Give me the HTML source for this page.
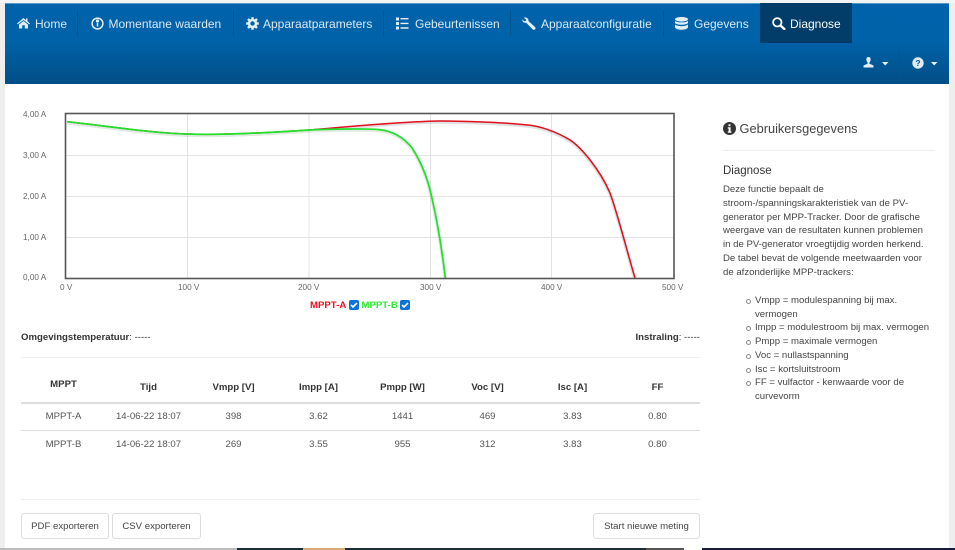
<!DOCTYPE html>
<html><head><meta charset="utf-8"><style>
html,body{margin:0;padding:0;background:#fff}
#p{position:relative;width:955px;height:550px;overflow:hidden;background:#fff;font-family:"Liberation Sans",sans-serif;filter:blur(.35px)}
#p div,#p span.a,#p svg.a{position:absolute}
.t{white-space:nowrap;line-height:14px}
.nav{color:#dce8f2;font-size:12px;top:17px}
.sep{width:1px;top:10px;height:26px;background:#04548f}
.ax{font-size:8.2px;color:#666;white-space:nowrap;line-height:10px}
.c{text-align:center;width:85px;white-space:nowrap;font-size:9.6px;line-height:12px;color:#555}
.h{font-weight:bold;color:#333}
.b{font-size:9.6px;color:#444;white-space:nowrap;line-height:14px;left:723px}
.l{left:755px}
.dot{left:746px;width:3px;height:3px;border:1px solid #888;border-radius:50%}
.btn{border:1px solid #ddd;border-radius:3px;box-sizing:border-box;height:26px;top:513px;font-size:9.6px;color:#444;text-align:center;line-height:25px;background:#fff}
.cb{width:10px;height:10px;top:300px;background:#0b72d8;border-radius:2px}
</style></head><body><div id="p">
<div style="left:0;top:0;width:5px;height:550px;background:#eee"></div>
<div style="left:949px;top:0;width:6px;height:550px;background:#eee"></div>
<div style="left:0;top:0;width:955px;height:3px;background:#f4f4f4"></div>
<div style="left:5px;top:3px;width:944px;height:81px;background:linear-gradient(#0062aa 0%,#0062a8 45%,#014e86 100%);border-top:1px solid #4d9ac8;box-sizing:border-box"></div>
<div style="left:760px;top:3px;width:92px;height:40px;background:#023c68"></div>
<div class="sep" style="left:77px"></div><div class="sep" style="left:233px"></div><div class="sep" style="left:383px"></div><div class="sep" style="left:510px"></div><div class="sep" style="left:663px"></div>
<div class="sep" style="left:899px;top:50px;height:28px"></div>

<svg class="a" style="left:17px;top:17px" width="13" height="12" viewBox="0 0 13 12"><path fill="#e4eef6" d="M6.500 1 0 6.500l.8.900L6.500 3l5.700 4.400.8-.9L10.500 4.400V1.500H9V3.200ZM2 7.600V11.500H5.200V8.200H7.800V11.500H11V7.600L6.500 4Z"/></svg>
<div class="t nav" style="left:35px">Home</div>
<svg class="a" style="left:91px;top:17px" width="13" height="13" viewBox="0 0 13 13"><circle cx="6.500" cy="6.500" r="5.400" fill="none" stroke="#e4eef6" stroke-width="1.500"/><circle cx="6.500" cy="4" r="1.600" fill="#e4eef6"/><path stroke="#e4eef6" stroke-width="1.500" d="M6.500 6v3.500"/></svg>
<div class="t nav" style="left:108.500px">Momentane waarden</div>
<svg class="a" style="left:246px;top:17px" width="13" height="13" viewBox="0 0 13 13"><circle cx="6.500" cy="6.500" r="3.500" fill="none" stroke="#e4eef6" stroke-width="2.600"/><path stroke="#e4eef6" stroke-width="2.400" d="M6.500 .2v2M6.500 10.800v2M.2 6.500h2M10.800 6.500h2M2 2l1.400 1.400M9.600 9.600 11 11M11 2 9.600 3.400M3.400 9.600 2 11"/></svg>
<div class="t nav" style="left:263px">Apparaatparameters</div>
<svg class="a" style="left:396px;top:17px" width="13" height="13" viewBox="0 0 13 13"><path fill="#e4eef6" d="M0 .5h3v3H0zM0 5h3v3H0zM0 9.500h3v3H0zM4.500 1h8v1.400h-8zM4.500 5.700h8v1.400h-8zM4.500 10.300h8v1.400h-8z"/></svg>
<div class="t nav" style="left:415px">Gebeurtenissen</div>
<svg class="a" style="left:522px;top:17px" width="14" height="13" viewBox="0 0 14 13"><path fill="#e4eef6" d="M1.500.8 4.200 2.500 3.800 4 2.200 4.200.3 2.300C0 4.500 1.800 6.300 4.200 5.800L10.800 12.500C11.500 13 12.800 13 13.300 12C13.700 11.300 13.500 10.500 13 10L6.400 4C7 1.800 4.500-.3 1.500.8Z"/></svg>
<div class="t nav" style="left:541px">Apparaatconfiguratie</div>
<svg class="a" style="left:675px;top:17px" width="13" height="13" viewBox="0 0 13 13"><ellipse cx="6.500" cy="2.300" rx="6.500" ry="2.300" fill="#e4eef6"/><path fill="#e4eef6" d="M0 3.700C1.500 6 11.500 6 13 3.700V6C11.500 8.300 1.500 8.300 0 6ZM0 7.400C1.500 9.700 11.500 9.700 13 7.400V10.500C11.500 13.500 1.500 13.500 0 10.500Z"/></svg>
<div class="t nav" style="left:694px">Gegevens</div>
<svg class="a" style="left:772px;top:17px" width="14" height="13" viewBox="0 0 14 13"><circle cx="5.300" cy="5.300" r="4.200" fill="none" stroke="#fff" stroke-width="1.800"/><path stroke="#fff" stroke-width="2.400" stroke-linecap="round" d="M8.500 8.500 12.300 12"/></svg>
<div class="t nav" style="left:790px;color:#fff">Diagnose</div>

<svg class="a" style="left:863px;top:57px" width="11" height="11" viewBox="0 0 11 11"><path fill="#e4eef6" d="M5.500 0C3.800 0 3.300 1.300 3.400 2.600 3.500 4 4 5 4.600 5.500V6.600L.5 8.500V10.500H10.500V8.500L6.400 6.600V5.500C7 5 7.500 4 7.600 2.600 7.700 1.300 7.200 0 5.500 0Z"/></svg>
<svg class="a" style="left:882px;top:62px" width="7" height="4"><path fill="#e4eef6" d="M0 0h6.500L3.200 3.500Z"/></svg>
<svg class="a" style="left:912px;top:57px" width="12" height="12" viewBox="0 0 12 12"><circle cx="6" cy="6" r="5.700" fill="#dfeaf3"/><text x="6" y="9" font-size="8.500" font-weight="bold" text-anchor="middle" fill="#01558f" font-family="Liberation Sans">?</text></svg>
<svg class="a" style="left:931px;top:62px" width="7" height="4"><path fill="#e4eef6" d="M0 0h6.500L3.200 3.500Z"/></svg>

<svg class="a" style="left:0;top:0" width="700" height="300" viewBox="0 0 700 300">
<path stroke="#e3e3e3" fill="none" d="M66 155.500H674M66 196.500H674M66 237.500H674M187.500 114V278M309 114V278M430.500 114V278M551.500 114V278"/>
<g fill="none" stroke-width="3.500" opacity=".22" transform="translate(0,1)">
<path stroke="#777" d="M67,121.700 C100,125 150,133 187,134 C215,135 250,134 309,130 C340,127.500 400,121.500 440,121 C470,121 510,123 530,125.300 C540,126.500 555,131 570,140 C582,148 600,170 610,193 C618,215 628,255 635,278"/>
<path stroke="#7a7" d="M67,121.700 C100,125 150,133 187,134 C215,135 250,134 309,130 C330,129 365,128.500 378,129.500 C395,131 405,139 412,148 C422,163 428,180 431.700,197 C437,220 442,250 445.300,278"/></g>
<path fill="none" stroke="#e0101c" stroke-width="1.500" d="M67,121.700 C100,125 150,133 187,134 C215,135 250,134 309,130 C340,127.500 400,121.500 440,121 C470,121 510,123 530,125.300 C540,126.500 555,131 570,140 C582,148 600,170 610,193 C618,215 628,255 635,278"/>
<path fill="none" stroke="#22e02c" stroke-width="1.700" d="M67,121.700 C100,125 150,133 187,134 C215,135 250,134 309,130 C330,129 365,128.500 378,129.500 C395,131 405,139 412,148 C422,163 428,180 431.700,197 C437,220 442,250 445.300,278"/>
<rect x="65.500" y="113.500" width="608.500" height="165" fill="none" stroke="#555" stroke-width="1.600"/>
</svg>

<div class="ax" style="left:23px;top:110px">4,00 A</div><div class="ax" style="left:23px;top:151px">3,00 A</div><div class="ax" style="left:23px;top:192px">2,00 A</div><div class="ax" style="left:23px;top:233px">1,00 A</div><div class="ax" style="left:23px;top:273px">0,00 A</div>
<div class="ax" style="left:60px;top:283px">0 V</div><div class="ax" style="left:178px;top:283px">100 V</div><div class="ax" style="left:298px;top:283px">200 V</div><div class="ax" style="left:420px;top:283px">300 V</div><div class="ax" style="left:541px;top:283px">400 V</div><div class="ax" style="left:662px;top:283px">500 V</div>

<div class="t" style="left:310px;top:299px;font-size:9.600px;font-weight:bold;color:#e8101c">MPPT-A</div>
<div class="cb" style="left:349px"></div><svg class="a" style="left:349px;top:300px" width="10" height="10"><path d="M2 5l2 2 4-4" fill="none" stroke="#fff" stroke-width="1.600"/></svg>
<div class="t" style="left:361.500px;top:299px;font-size:9.600px;font-weight:bold;color:#2ae830">MPPT-B</div>
<div class="cb" style="left:400px"></div><svg class="a" style="left:400px;top:300px" width="10" height="10"><path d="M2 5l2 2 4-4" fill="none" stroke="#fff" stroke-width="1.600"/></svg>

<div class="t" style="left:21px;top:331px;font-size:9.600px;color:#333"><b>Omgevingstemperatuur</b>: -----</div>
<div class="t" style="right:255px;top:331px;font-size:9.600px;color:#333"><b>Instraling</b>: -----</div>
<div style="left:21px;top:357px;width:679px;height:1px;background:#eee"></div>

<div class="c h" style="left:21px;top:379px">MPPT</div><div class="c h" style="left:106px;top:382px">Tijd</div><div class="c h" style="left:191px;top:382px">Vmpp [V]</div><div class="c h" style="left:276px;top:382px">Impp [A]</div><div class="c h" style="left:360px;top:382px">Pmpp [W]</div><div class="c h" style="left:445px;top:382px">Voc [V]</div><div class="c h" style="left:530px;top:382px">Isc [A]</div><div class="c h" style="left:615px;top:382px">FF</div>
<div style="left:21px;top:402px;width:679px;height:2px;background:#ddd"></div>
<div class="c" style="left:21px;top:411px">MPPT-A</div><div class="c" style="left:106px;top:411px">14-06-22 18:07</div><div class="c" style="left:191px;top:411px">398</div><div class="c" style="left:276px;top:411px">3.62</div><div class="c" style="left:360px;top:411px">1441</div><div class="c" style="left:445px;top:411px">469</div><div class="c" style="left:530px;top:411px">3.83</div><div class="c" style="left:615px;top:411px">0.80</div>
<div style="left:21px;top:430px;width:679px;height:1px;background:#ddd"></div>
<div class="c" style="left:21px;top:438.500px">MPPT-B</div><div class="c" style="left:106px;top:438.500px">14-06-22 18:07</div><div class="c" style="left:191px;top:438.500px">269</div><div class="c" style="left:276px;top:438.500px">3.55</div><div class="c" style="left:360px;top:438.500px">955</div><div class="c" style="left:445px;top:438.500px">312</div><div class="c" style="left:530px;top:438.500px">3.83</div><div class="c" style="left:615px;top:438.500px">0.80</div>
<div style="left:21px;top:499px;width:679px;height:1px;background:#eee"></div>

<div class="btn" style="left:21px;width:88px">PDF exporteren</div>
<div class="btn" style="left:112px;width:89px">CSV exporteren</div>
<div class="btn" style="left:593px;width:107px">Start nieuwe meting</div>

<svg class="a" style="left:723px;top:122px" width="13" height="13" viewBox="0 0 13 13"><circle cx="6.500" cy="6.500" r="6.500" fill="#333"/><path fill="#fff" d="M5.500 2.200h2v1.900h-2zM4.800 5.300h2.800v4.200h.8v1.200H4.800V9.500h.8V6.500h-.8z"/></svg>
<div class="t" style="left:739.500px;top:122px;font-size:12.800px;color:#444">Gebruikersgegevens</div>
<div style="left:723px;top:150px;width:212px;height:1px;background:#eee"></div>
<div class="t" style="left:723px;top:164px;font-size:11.500px;color:#333">Diagnose</div>
<div class="b" style="top:183px">Deze functie bepaalt de</div>
<div class="b" style="top:197px">stroom-/spanningskarakteristiek van de PV-</div>
<div class="b" style="top:211px">generator per MPP-Tracker. Door de grafische</div>
<div class="b" style="top:224px">weergave van de resultaten kunnen problemen</div>
<div class="b" style="top:238px">in de PV-generator vroegtijdig worden herkend.</div>
<div class="b" style="top:252px">De tabel bevat de volgende meetwaarden voor</div>
<div class="b" style="top:266px">de afzonderlijke MPP-trackers:</div>

<div class="dot" style="top:299px"></div><div class="b l" style="top:294px">Vmpp = modulespanning bij max.</div>
<div class="b l" style="top:308px">vermogen</div>
<div class="dot" style="top:326px"></div><div class="b l" style="top:321px">Impp = modulestroom bij max. vermogen</div>
<div class="dot" style="top:340px"></div><div class="b l" style="top:335px">Pmpp = maximale vermogen</div>
<div class="dot" style="top:354px"></div><div class="b l" style="top:349px">Voc = nullastspanning</div>
<div class="dot" style="top:368px"></div><div class="b l" style="top:363px">Isc = kortsluitstroom</div>
<div class="dot" style="top:381px"></div><div class="b l" style="top:376px">FF = vulfactor - kenwaarde voor de</div>
<div class="b l" style="top:390px">curvevorm</div>

<div style="left:0;top:548px;width:237px;height:2px;background:#bbb"></div>
<div style="left:237px;top:548px;width:66px;height:2px;background:#1c2d35"></div>
<div style="left:303px;top:548px;width:42px;height:2px;background:#d8aa78"></div>
<div style="left:345px;top:548px;width:301px;height:2px;background:#1c2d35"></div>
<div style="left:646px;top:548px;width:38px;height:2px;background:#555"></div>
<div style="left:702px;top:548px;width:253px;height:2px;background:#141c3a"></div>
</div></body></html>
